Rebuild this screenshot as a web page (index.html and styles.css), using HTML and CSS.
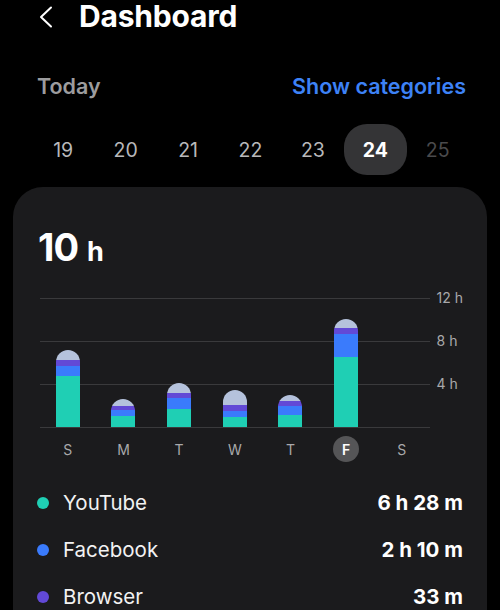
FILE: index.html
```html
<!DOCTYPE html>
<html>
<head>
<meta charset="utf-8">
<link rel="stylesheet" href="styles.css">
</head>
<body>
<header class="topbar">
  <svg class="back" width="16" height="22" viewBox="0 0 16 22"><path d="M13 1.5 L3 11 L13 20.5" fill="none" stroke="#fff" stroke-width="2" stroke-linecap="round" stroke-linejoin="round"/></svg>
  <h1 class="title">Dashboard</h1>
</header>
<div class="subhead">
  <span class="today">Today</span>
  <span class="cats">Show categories</span>
</div>
<div class="dates">
  <span class="date">19</span>
  <span class="date">20</span>
  <span class="date">21</span>
  <span class="date">22</span>
  <span class="date">23</span>
  <span class="date active">24</span>
  <span class="date future">25</span>
</div>
<section class="card">
  <div class="total"><span class="num">10</span><span class="unit">h</span></div>
  <div class="chart">
    <div class="plotwrap">
      <div class="plot">
        <div class="col"><div class="bar"><div class="seg other" style="height:10px"></div><div class="seg browser" style="height:6px"></div><div class="seg fb" style="height:10px"></div><div class="seg yt" style="height:51px"></div></div></div>
        <div class="col"><div class="bar"><div class="seg other" style="height:7px"></div><div class="seg browser" style="height:4px"></div><div class="seg fb" style="height:6px"></div><div class="seg yt" style="height:11px"></div></div></div>
        <div class="col"><div class="bar"><div class="seg other" style="height:10px"></div><div class="seg browser" style="height:5px"></div><div class="seg fb" style="height:11px"></div><div class="seg yt" style="height:18px"></div></div></div>
        <div class="col"><div class="bar"><div class="seg other" style="height:15px"></div><div class="seg browser" style="height:6px"></div><div class="seg fb" style="height:6px"></div><div class="seg yt" style="height:10px"></div></div></div>
        <div class="col"><div class="bar"><div class="seg other" style="height:6px"></div><div class="seg browser" style="height:5px"></div><div class="seg fb" style="height:9px"></div><div class="seg yt" style="height:12px"></div></div></div>
        <div class="col"><div class="bar"><div class="seg other" style="height:9px"></div><div class="seg browser" style="height:6px"></div><div class="seg fb" style="height:23px"></div><div class="seg yt" style="height:70px"></div></div></div>
        <div class="col"></div>
      </div>
      <div class="days">
        <span class="day">S</span>
        <span class="day">M</span>
        <span class="day">T</span>
        <span class="day">W</span>
        <span class="day">T</span>
        <span class="day"><span class="sel">F</span></span>
        <span class="day">S</span>
      </div>
    </div>
    <div class="axis">
      <span class="tick">12 h</span>
      <span class="tick">8 h</span>
      <span class="tick">4 h</span>
    </div>
  </div>
  <ul class="legend">
    <li class="row"><span class="dot yt"></span><span class="app">YouTube</span><span class="time">6 h 28 m</span></li>
    <li class="row"><span class="dot fb"></span><span class="app">Facebook</span><span class="time">2 h 10 m</span></li>
    <li class="row"><span class="dot browser"></span><span class="app">Browser</span><span class="time">33 m</span></li>
  </ul>
</section>
</body>
</html>
```

FILE: styles.css
```css
* { box-sizing: border-box; }
html, body {
  margin: 0;
  padding: 0;
  background: #000;
  color: #fff;
  font-family: Inter, "Noto Sans", "DejaVu Sans", sans-serif;
  width: 500px;
  height: 610px;
  overflow: hidden;
}
.topbar {
  display: flex;
  align-items: flex-start;
  height: 31px;
  padding-left: 38px;
  padding-top: 1px;
}
.back { display: block; margin-top: 5px; }
.title {
  margin: 0 0 0 25px;
  font-size: 30px;
  font-weight: 700;
  line-height: 30px;
  letter-spacing: -0.2px;
}
.subhead {
  display: flex;
  justify-content: space-between;
  align-items: center;
  padding: 0 34px 0 37px;
  margin-top: 36px;
  height: 38px;
  font-size: 21.5px;
  font-weight: 600;
}
.today { color: #9c9c9e; }
.cats { color: #3d82f6; }
.dates {
  display: flex;
  padding: 0 31px 0 32px;
  margin-top: 19px;
  height: 51px;
}
.date {
  flex: 1;
  display: flex;
  align-items: center;
  justify-content: center;
  font-size: 19.5px;
  color: #b8b8ba;
  border-radius: 23px;
}
.date.active {
  background: #343436;
  color: #fff;
  font-weight: 700;
}
.date.future { color: #4a4a4c; }
.card {
  margin: 12px 13px 0 13px;
  background: #1b1b1d;
  border-radius: 30px;
  padding: 40px 24px 0 25px;
  height: 460px;
}
.total {
  display: flex;
  align-items: baseline;
  line-height: 40px;
}
.num { font-size: 38px; font-weight: 700; letter-spacing: -1px; }
.unit { font-size: 27px; font-weight: 700; margin-left: 9px; }
.chart {
  display: flex;
  margin-top: 26px;
  margin-left: 2px;
}
.plotwrap { width: 396px; }
.plot {
  height: 130px;
  display: flex;
  align-items: flex-end;
  border-bottom: 1px solid #3a3a3c;
  background: repeating-linear-gradient(to bottom, #3a3a3c 0, #3a3a3c 1px, transparent 1px, transparent 43px);
}
.col {
  flex: 1;
  display: flex;
  justify-content: center;
  align-items: flex-end;
}
.bar {
  width: 24px;
  border-radius: 12px 12px 0 0;
  overflow: hidden;
  display: flex;
  flex-direction: column;
}
.seg { width: 100%; }
.other { background: #b5c2dc; }
.browser { background: #6249d6; }
.fb { background: #3a7bfc; }
.yt { background: #1fcfb4; }
.days {
  display: flex;
  margin-top: 8px;
  height: 26px;
}
.day {
  flex: 1;
  display: flex;
  align-items: center;
  justify-content: center;
  font-size: 14px;
  color: #a9a9ab;
}
.sel {
  width: 26px;
  height: 26px;
  border-radius: 50%;
  background: #555557;
  color: #fff;
  font-weight: 600;
  display: flex;
  align-items: center;
  justify-content: center;
}
.axis {
  display: flex;
  flex-direction: column;
  margin-top: -8px;
  padding-left: 7px;
  white-space: nowrap;
}
.tick {
  height: 43px;
  line-height: 16px;
  font-size: 14px;
  color: #a9a9ab;
  white-space: nowrap;
}
.legend {
  list-style: none;
  margin: 17px 0 0 0;
  padding: 0;
}
.row {
  display: flex;
  align-items: center;
  height: 47px;
  font-size: 20.5px;
}
.dot {
  width: 12px;
  height: 12px;
  border-radius: 50%;
  margin-left: -1px;
  margin-right: 14px;
}
.app { flex: 1; color: #f2f2f2; }
.time { font-weight: 700; }
```
